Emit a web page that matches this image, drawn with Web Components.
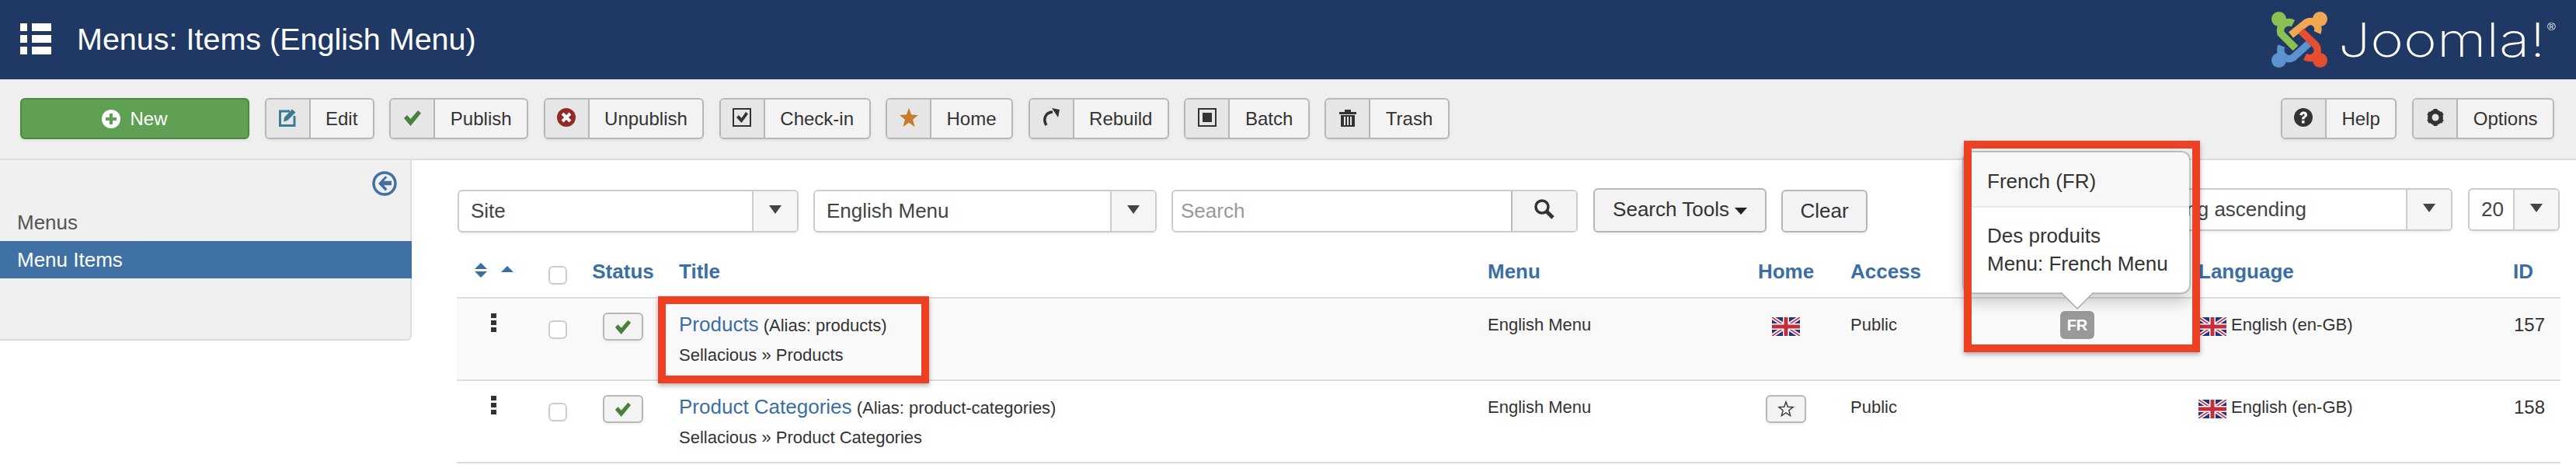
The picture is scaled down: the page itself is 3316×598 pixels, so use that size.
<!DOCTYPE html>
<html lang="en">
<head>
<meta charset="utf-8">
<title>Menus: Items (English Menu)</title>
<style>
html, body { margin: 0; padding: 0; background: #fff; }
body { position: relative; width: 3316px; height: 598px; overflow: hidden; font-family: "Liberation Sans", Arial, sans-serif; color: #333; }
</style>
</head>
<body>
<jm-header heading="Menus: Items (English Menu)"></jm-header>
<jm-toolbar>
  <jm-button variant="new" icon="plus">New</jm-button>
  <jm-button icon="edit">Edit</jm-button>
  <jm-button icon="check">Publish</jm-button>
  <jm-button icon="cancel">Unpublish</jm-button>
  <jm-button icon="checkin">Check-in</jm-button>
  <jm-button icon="star">Home</jm-button>
  <jm-button icon="refresh">Rebuild</jm-button>
  <jm-button icon="batch">Batch</jm-button>
  <jm-button icon="trash">Trash</jm-button>
  <jm-button slot="right" icon="help">Help</jm-button>
  <jm-button slot="right" icon="gear">Options</jm-button>
</jm-toolbar>
<jm-layout>
  <jm-sidebar slot="side"></jm-sidebar>
  <jm-filters></jm-filters>
  <jm-table-head></jm-table-head>
  <jm-row shade link="Products" alias="products" trail="Sellacious » Products" rowid="157" home="flag" assoc="FR"></jm-row>
  <jm-row link="Product Categories" alias="product-categories" trail="Sellacious » Product Categories" rowid="158" home="star"></jm-row>
</jm-layout>
<jm-popover heading="French (FR)" line1="Des produits" line2="Menu: French Menu"></jm-popover>
<jm-mark style="left:847px;top:381px;width:349px;height:112px"></jm-mark>
<jm-mark style="left:2528px;top:181px;width:304px;height:272px"></jm-mark>

<script>
const ICONS = {
    plus: `<svg viewBox="0 0 24 24" width="24" height="24"><circle cx="12" cy="12" r="12" fill="#fff"/><path d="M10 5h4v5h5v4h-5v5h-4v-5H5v-4h5z" fill="#60a054"/></svg>`,
    edit: `<svg viewBox="0 0 24 24" width="24" height="24"><path d="M15 4H2.500v18.500H21V10" fill="none" stroke="#3b7a94" stroke-width="3"/><path d="M8 12 18 1.500l4.500 4L12 16l-5 1.500z" fill="#3b7a94"/></svg>`,
    check: `<svg viewBox="0 0 24 24" width="24" height="24"><path d="M1 13l4-4 4.500 5L19 3l4 3.500L9.500 23z" fill="#4a7f3c"/></svg>`,
    cancel: `<svg viewBox="0 0 24 24" width="24" height="24"><circle cx="12" cy="12" r="12" fill="#942a25"/><path d="M7 7l10 10M17 7 7 17" stroke="#fff" stroke-width="4"/></svg>`,
    checkin: `<svg viewBox="0 0 24 24" width="24" height="24"><rect x="1" y="1" width="22" height="22" fill="none" stroke="#333" stroke-width="2"/><path d="M5 12l3-3 3.500 4L17 5l3 2.500L11.500 19z" fill="#333"/></svg>`,
    star: `<svg viewBox="0 0 24 24" width="24" height="24"><path d="M12 0l3.200 8.600 8.800.4-6.900 5.700 2.400 9.300-7.500-5.300L4.500 24l2.400-9.300L0 9l8.800-.4z" fill="#c67c2a"/></svg>`,
    refresh: `<svg viewBox="0 0 24 24" width="24" height="24"><path d="M6 22C1.500 15 4 5.500 14 5" fill="none" stroke="#333" stroke-width="3.500"/><path d="M13 0l10 2-2 10z" fill="#333"/></svg>`,
    batch: `<svg viewBox="0 0 24 24" width="24" height="24"><rect x="1" y="1" width="22" height="22" fill="none" stroke="#333" stroke-width="2"/><rect x="6" y="6" width="12" height="12" fill="#333"/></svg>`,
    trash: `<svg viewBox="0 0 24 24" width="24" height="24"><path d="M1 5h22v3H1zM8 2h8v3H8z" fill="#333"/><path d="M3 9h18v15H3z" fill="#333"/><path d="M7 11h2v11H7zM11 11h2v11h-2zM15 11h2v11h-2z" fill="#e6e6e6"/></svg>`,
    help: `<svg viewBox="0 0 24 24" width="24" height="24"><circle cx="12" cy="12" r="12" fill="#333"/><path d="M7.500 9c0-6 9.500-6 9.500-.5 0 3.500-3.500 3-3.500 6h-3.500c0-4 3.500-3.500 3.500-5.500 0-2-2.500-2-2.500.5z" fill="#fff"/><rect x="10" y="16" width="3.500" height="3.500" fill="#fff"/></svg>`,
    gear: `<svg viewBox="0 0 24 24" width="24" height="24"><circle cx="12" cy="12" r="7" fill="none" stroke="#333" stroke-width="6"/><path d="M12 1v22M2.500 6.500l19 11M21.500 6.500l-19 11" stroke="#333" stroke-width="5"/><circle cx="12" cy="12" r="4.500" fill="#e6e6e6"/></svg>`
};

const FLAG = `<svg viewBox="0 0 36 24" width="36" height="24" style="display:block;filter:blur(.5px)">
<rect width="36" height="24" fill="#25347a"/>
<path d="M0 0l36 24M36 0 0 24" stroke="#fff" stroke-width="5"/>
<path d="M0 0l36 24M36 0 0 24" stroke="#c8304a" stroke-width="1.800"/>
<path d="M18 0v24M0 12h36" stroke="#fff" stroke-width="8"/>
<path d="M18 0v24M0 12h36" stroke="#c52c3c" stroke-width="5"/></svg>`;

class JmHeader extends HTMLElement {
    constructor() {
        super();
        this.attachShadow({ mode: 'open' });
    }
    connectedCallback() {
        this.shadowRoot.innerHTML = `
            <style>
                :host { display: flex; align-items: center; height: 102px; background: #1f3864; color: #fff; box-sizing: border-box; padding: 0 30px 0 26px; }
                .menu { width: 40px; height: 40px; margin-top: -2px; display: block; flex: none; }
                h1 { font: 400 39.500px/1 "Liberation Sans", Arial, sans-serif; margin: 0 0 0 33px; flex: 1; }
                .logo { display: flex; align-items: center; width: 362px; flex: none; }
                .logo svg { display: block; flex: none; }
                .word { font: 200 60px/1 Inter, "Liberation Sans", sans-serif; margin-left: 14px; color: #fff; white-space: nowrap; transform: scaleX(1.22); transform-origin: left center; }
                .reg { font: 400 12px/1 "Liberation Sans", sans-serif; vertical-align: 34px; margin-left: 2px; }
            </style>
            <svg class="menu" viewBox="0 0 40 40">
                <path d="M0 0h9v10H0zM15 0h25v10H15zM0 15h9v10H0zM15 15h25v10H15zM0 30h9v10H0zM15 30h25v10H15z" fill="#fff"/>
            </svg>
            <h1>${this.getAttribute('heading')}</h1>
            <div class="logo">
                <svg viewBox="0 0 72 72" width="72" height="72" fill="none" stroke-width="9.500">
                    <circle cx="9.500" cy="9.500" r="9.500" fill="#8bc152"/>
                    <path d="M28 15C20 11 9 17 12 28L31 47" stroke="#8bc152"/>
                    <circle cx="62.500" cy="9.500" r="9.500" fill="#f2a654"/>
                    <path d="M59 27C63 18 54 9 45 14L25 30" stroke="#f2a654"/>
                    <circle cx="9.500" cy="62.500" r="9.500" fill="#5c93cf"/>
                    <path d="M48 41L28 59C20 64 8 56 13 44" stroke="#5c93cf"/>
                    <circle cx="62.500" cy="62.500" r="9.500" fill="#e54f30"/>
                    <path d="M38 25L57 43C63 52 56 64 43 58" stroke="#e54f30"/>
                </svg>
                <span class="word">Joomla!<span class="reg">®</span></span>
            </div>
        `;
    }
}

class JmToolbar extends HTMLElement {
    constructor() {
        super();
        this.attachShadow({ mode: 'open' });
        this.shadowRoot.innerHTML = `
            <style>
                :host { display: flex; height: 104px; box-sizing: border-box; background: #efefef; border-bottom: 2px solid #ddd; padding: 24px 28px 0 26px; gap: 19.500px; }
                .right { margin-left: auto; display: flex; gap: 20px; }
            </style>
            <slot></slot>
            <div class="right"><slot name="right"></slot></div>
        `;
    }
}

class JmButton extends HTMLElement {
    constructor() {
        super();
        this.attachShadow({ mode: 'open' });
    }
    connectedCallback() {
        const icon = ICONS[this.getAttribute('icon')];
        this.shadowRoot.innerHTML = `
            <style>
                :host { display: inline-flex; height: 53px; box-sizing: border-box; border: 2px solid #b7b7b7; border-radius: 6px; background: #f3f3f3; color: #333; font: 400 24px/1 "Liberation Sans", Arial, sans-serif; box-shadow: 0 2px 3px rgba(0,0,0,.06); overflow: hidden; }
                :host([variant="new"]) { width: 295px; justify-content: center; align-items: center; gap: 12px; background: #60a054; border-color: #4c8a41; color: #fff; }
                .ico { width: 55px; flex: none; background: #e6e6e6; border-right: 2px solid #b7b7b7; display: flex; align-items: center; justify-content: center; padding-bottom: 3px; box-sizing: content-box; }
                :host([variant="new"]) .ico { width: auto; background: none; border: 0; padding: 0; }
                .txt { padding: 0 19.500px; display: flex; align-items: center; }
                :host([variant="new"]) .txt { padding: 0; }
            </style>
            <span class="ico">${icon}</span>
            <span class="txt"><slot></slot></span>
        `;
    }
}

class JmLayout extends HTMLElement {
    constructor() {
        super();
        this.attachShadow({ mode: 'open' });
        this.shadowRoot.innerHTML = `
            <style>
                :host { display: flex; align-items: flex-start; }
                .main { flex: 1; padding: 0 20px 0 58px; min-width: 0; }
            </style>
            <slot name="side"></slot>
            <div class="main"><slot></slot></div>
        `;
    }
}

class JmSidebar extends HTMLElement {
    constructor() {
        super();
        this.attachShadow({ mode: 'open' });
        this.shadowRoot.innerHTML = `
            <style>
                :host { display: block; flex: none; width: 530px; height: 232px; box-sizing: border-box; background: #f0f0f0; border-right: 2px solid #ddd; border-bottom: 2px solid #ddd; border-bottom-right-radius: 6px; padding-top: 14px; font: 400 26px/48px "Liberation Sans", Arial, sans-serif; color: #555; }
                .top { display: flex; justify-content: flex-end; padding-right: 17px; height: 32px; margin-bottom: 10px; }
                .item { height: 48px; padding-left: 22px; }
                .active { background: #3f71a5; color: #fff; margin-right: -2px; }
            </style>
            <div class="top">
                <svg viewBox="0 0 32 32" width="32" height="32"><circle cx="16" cy="16" r="14" fill="none" stroke="#3f71a5" stroke-width="3.500"/><path d="M17 6.500 8 16l9 9.500 2.500-2.500-4.500-4.700H25v-5.600H15l4.500-4.700z" fill="#3f71a5"/></svg>
            </div>
            <div class="item">Menus</div>
            <div class="item active">Menu Items</div>
        `;
    }
}

class JmSelect extends HTMLElement {
    constructor() {
        super();
        this.attachShadow({ mode: 'open' });
    }
    connectedCallback() {
        this.shadowRoot.innerHTML = `
            <style>
                :host { display: flex; flex: none; height: 55px; box-sizing: border-box; border: 2px solid #ccc; border-radius: 6px; background: #fff; box-shadow: 0 2px 3px rgba(0,0,0,.06); font: 400 26px/1 "Liberation Sans", Arial, sans-serif; color: #444; overflow: hidden; }
                .val { flex: 1; padding-left: 15px; padding-bottom: 2px; display: flex; align-items: center; white-space: nowrap; min-width: 0; }
                .arrow { flex: none; width: 56px; background: #f5f5f5; border-left: 2px solid #ccc; display: flex; align-items: center; justify-content: center; }
                .arrow i { width: 0; height: 0; border: 8px solid transparent; border-top: 11px solid #444; border-bottom: 0; margin-top: -4px; }
            </style>
            <span class="val">${this.getAttribute('value')}</span>
            <span class="arrow"><i></i></span>
        `;
    }
}

class JmFilters extends HTMLElement {
    constructor() {
        super();
        this.attachShadow({ mode: 'open' });
        this.shadowRoot.innerHTML = `
            <style>
                :host { display: flex; align-items: flex-start; margin: 38px 1px 0 1px; font: 400 26px/1 "Liberation Sans", Arial, sans-serif; color: #333; height: 55px; }
                .search { display: flex; flex: none; width: 523px; height: 55px; box-sizing: border-box; border: 2px solid #ccc; border-radius: 6px; overflow: hidden; margin-left: 19px; background: #fff; }
                .search span { flex: 1; display: flex; align-items: center; padding-left: 10px; padding-bottom: 2px; color: #999; }
                .search b { flex: none; width: 82px; background: #f3f3f3; border-left: 2px solid #bbb; display: flex; align-items: center; justify-content: center; padding-bottom: 6px; }
                .btn { flex: none; box-sizing: border-box; border: 2px solid #b7b7b7; border-radius: 6px; background: #f3f3f3; display: flex; align-items: center; justify-content: center; box-shadow: 0 2px 3px rgba(0,0,0,.06); }
                .tools { width: 223px; height: 57px; margin: -2px 0 0 20px; gap: 7px; padding-bottom: 4px; }
                .tools i { width: 0; height: 0; border: 8px solid transparent; border-top: 9px solid #222; border-bottom: 0; margin-top: 6px; }
                .clear { width: 111px; height: 55px; margin-left: 19px; padding-bottom: 2px; }
                .sort { width: 432px; margin: -2px 0 0 auto; }
                .limit { width: 118px; margin: -2px 0 0 20px; }
            </style>
            <jm-select style="width:439px" value="Site"></jm-select>
            <jm-select style="width:442px;margin-left:19px" value="English Menu"></jm-select>
            <div class="search">
                <span>Search</span>
                <b><svg viewBox="0 0 26 26" width="26" height="26"><circle cx="10" cy="10" r="8" fill="none" stroke="#333" stroke-width="3.500"/><path d="M15.500 15.500 24 24" stroke="#333" stroke-width="5"/></svg></b>
            </div>
            <div class="btn tools">Search Tools<i></i></div>
            <div class="btn clear">Clear</div>
            <jm-select class="sort" value="Ordering ascending"></jm-select>
            <jm-select class="limit" value="20"></jm-select>
        `;
    }
}

// shared column widths for the head and the rows
const COLUMNS = '108px 44px 124px 1041px 335px 118px 282px 180px 405px 71px';

class JmTableHead extends HTMLElement {
    constructor() {
        super();
        this.attachShadow({ mode: 'open' });
        this.shadowRoot.innerHTML = `
            <style>
                :host { display: grid; grid-template-columns: ${COLUMNS}; margin-top: 33px; padding-bottom: 15px; height: 35px; font: 700 26px/34px "Liberation Sans", Arial, sans-serif; color: #3b6ea5; }
                .sort { padding-left: 23px; display: flex; gap: 18px; }
                .sort svg { display: block; margin-top: 6px; }
                .box { margin: 10px 0 0 10px; }
                .mid { text-align: center; }
                .t { padding-left: 10px; }
                .m { padding-left: 10px; }
                .a { padding-left: 24px; }
                .l { padding-left: 10px; }
            </style>
            <div class="sort">
                <svg viewBox="0 0 16 20" width="16" height="20"><path d="M8 0l8 8H0zM0 11h16l-8 8z" fill="#3b6ea5"/></svg>
                <svg viewBox="0 0 16 20" width="16" height="20"><path d="M8 4l8 8H0z" fill="#3b6ea5"/></svg>
            </div>
            <div><jm-checkbox class="box"></jm-checkbox></div>
            <div class="mid">Status</div>
            <div class="t">Title</div>
            <div class="m">Menu</div>
            <div class="mid">Home</div>
            <div class="a">Access</div>
            <div></div>
            <div class="l">Language</div>
            <div class="l">ID</div>
        `;
    }
}

class JmCheckbox extends HTMLElement {
    constructor() {
        super();
        this.attachShadow({ mode: 'open' });
        this.shadowRoot.innerHTML = `
            <style>
                :host { display: block; width: 24px; height: 24px; box-sizing: border-box; border: 2px solid #ccc; border-radius: 6px; background: #fff; }
            </style>
        `;
    }
}

class JmRow extends HTMLElement {
    constructor() {
        super();
        this.attachShadow({ mode: 'open' });
    }
    connectedCallback() {
        const shaded = this.hasAttribute('shade');
        const assoc = this.getAttribute('assoc');
        const home = this.getAttribute('home') === 'flag'
            ? `<div class="flag">${FLAG}</div>`
            : `<div class="sbtn"><svg viewBox="0 0 24 24" width="22" height="22"><path d="M12 2l2.600 7 7.400.3-5.800 4.700 2 7.500-6.200-4.300-6.200 4.300 2-7.500L2 9.300 9.400 9z" fill="none" stroke="#333" stroke-width="1.500"/></svg></div>`;
        this.shadowRoot.innerHTML = `
            <style>
                :host { display: grid; grid-template-columns: ${COLUMNS}; height: 106px; box-sizing: border-box; border-top: 2px solid #ddd; background: ${shaded ? '#f9f9f9' : '#fff'}; font: 400 22px/38px "Liberation Sans", Arial, sans-serif; color: #333; }
                :host(:last-of-type) { border-bottom: 2px solid #ddd; height: 108px; }
                .grip { padding: 19px 0 0 44px; }
                .grip svg { display: block; }
                .box { margin: 28px 0 0 10px; }
                .cell { padding-top: 15px; }
                .sbtn { box-sizing: border-box; width: 52px; height: 36px; margin: 18px auto 0; border: 2px solid #b7b7b7; border-radius: 6px; background: #f3f3f3; display: flex; align-items: center; justify-content: center; box-shadow: 0 2px 3px rgba(0,0,0,.06); }
                .title { padding: 14px 0 0 10px; white-space: nowrap; }
                .title a { font-size: 26px; color: #3b6ea5; text-decoration: none; }
                .m { padding-left: 10px; }
                .flag { margin-top: 24px; display: flex; justify-content: center; }
                .a { padding-left: 24px; }
                .badge { margin: 16px 0 0 12px; width: 44px; height: 36px; border-radius: 6px; background: #999; color: #fff; font: 700 20px/36px "Liberation Sans", Arial, sans-serif; text-align: center; }
                .lang { padding: 15px 0 0 10px; display: flex; gap: 6px; white-space: nowrap; }
                .lang div { margin-top: 9px; }
                .id { padding-left: 11px; font-size: 24px; }
            </style>
            <div class="grip"><svg viewBox="0 0 7 24" width="7" height="24"><path d="M0 0h7v6H0zM0 9h7v6H0zM0 18h7v6H0z" fill="#333"/></svg></div>
            <div><jm-checkbox class="box"></jm-checkbox></div>
            <div><div class="sbtn"><svg viewBox="0 0 24 24" width="22" height="22">
                <path d="M1 13l4-4 4.500 5L19 3l4 3.500L9.500 23z" fill="#4a7f3c"/></svg></div></div>
            <div class="title"><a>${this.getAttribute('link')}</a> (Alias: ${this.getAttribute('alias')})<br>${this.getAttribute('trail')}</div>
            <div class="cell m">English Menu</div>
            <div>${home}</div>
            <div class="cell a">Public</div>
            <div>${assoc ? `<div class="badge">${assoc}</div>` : ''}</div>
            <div class="lang"><div>${FLAG}</div><span>English (en-GB)</span></div>
            <div class="cell id">${this.getAttribute('rowid')}</div>
        `;
    }
}

class JmPopover extends HTMLElement {
    constructor() {
        super();
        this.attachShadow({ mode: 'open' });
    }
    connectedCallback() {
        this.shadowRoot.innerHTML = `
            <style>
                :host { position: absolute; left: 2526px; top: 194px; width: 294px; height: 184px; box-sizing: border-box; background: #fff; border: 2px solid rgba(0,0,0,.2); border-radius: 12px; box-shadow: 0 10px 20px rgba(0,0,0,.2); font: 400 26px/36px "Liberation Sans", Arial, sans-serif; color: #333; background-clip: padding-box; }
                .head { height: 71px; box-sizing: border-box; background: #f7f7f7; border-bottom: 2px solid #ebebeb; border-radius: 10px 10px 0 0; padding: 19px 0 0 30px; }
                .body { padding: 18px 0 0 30px; white-space: nowrap; }
                svg { position: absolute; left: 125px; top: 180px; display: block; }
            </style>
            <div class="head">${this.getAttribute('heading')}</div>
            <div class="body">${this.getAttribute('line1')}<br>${this.getAttribute('line2')}</div>
            <svg viewBox="0 0 42 22" width="42" height="22"><path d="M0 0 21 21 42 0" fill="#fff" stroke="#aaa" stroke-width="1.500"/></svg>
        `;
    }
}

class JmMark extends HTMLElement {
    constructor() {
        super();
        this.attachShadow({ mode: 'open' });
        this.shadowRoot.innerHTML = `
            <style>
                :host { position: absolute; box-sizing: border-box; border: 10px solid #ee4023; box-shadow: 0 3px 6px rgba(0,0,0,.3); pointer-events: none; }
            </style>
        `;
    }
}

customElements.define('jm-header', JmHeader);
customElements.define('jm-toolbar', JmToolbar);
customElements.define('jm-button', JmButton);
customElements.define('jm-layout', JmLayout);
customElements.define('jm-sidebar', JmSidebar);
customElements.define('jm-select', JmSelect);
customElements.define('jm-filters', JmFilters);
customElements.define('jm-table-head', JmTableHead);
customElements.define('jm-checkbox', JmCheckbox);
customElements.define('jm-row', JmRow);
customElements.define('jm-popover', JmPopover);
customElements.define('jm-mark', JmMark);
</script>
</body>
</html>
